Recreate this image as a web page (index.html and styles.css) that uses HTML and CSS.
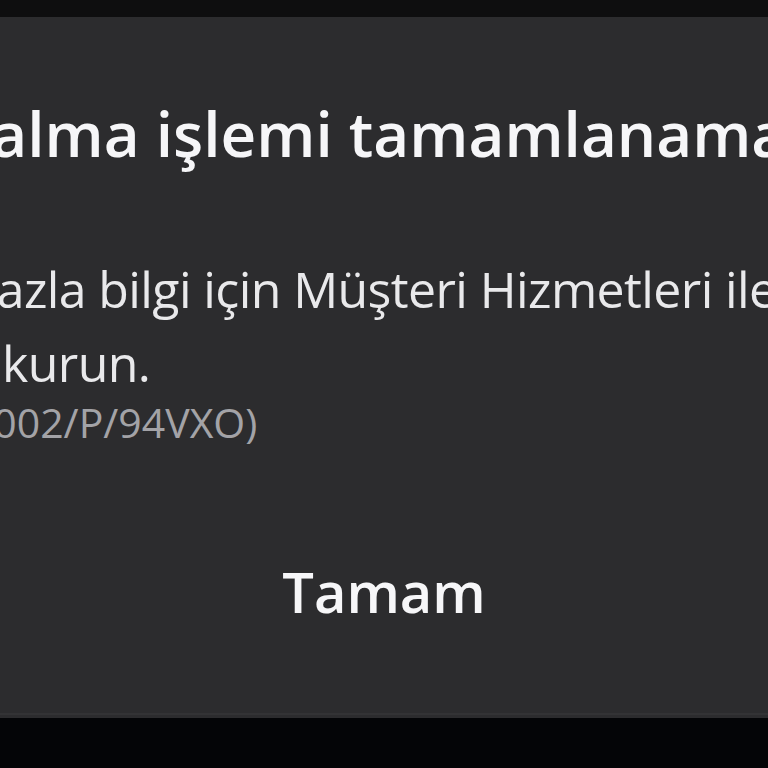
FILE: index.html
```html
<!DOCTYPE html>
<html>
<head>
<meta charset="UTF-8">
<title>Satın alma işlemi tamamlanamadı</title>
<meta name="viewport" content="width=device-width, initial-scale=1.0">
<link rel="stylesheet" href="styles.css">
</head>

<body>

<div class="topbar"></div>

<div class="dialog">
  <div class="content">
    <h1 class="title">Satın alma işlemi tamamlanamadı</h1>
    <p class="msg msg-1">Daha fazla bilgi için Müşteri Hizmetleri ile</p>
    <p class="msg msg-2">iletişim kurun.</p>
    <p class="code">(PR-DBIRC-002/P/94VXO)</p>
  </div>
  <div class="actions">
    <button class="ok">Tamam</button>
  </div>
  <div class="edge"></div>
</div>

</body>
</html>
```

FILE: styles.css
```css
body{margin:0;background:#040507;font-family:"Open Sans",Roboto,sans-serif;height:768px;overflow:hidden}
.topbar{height:17px;background:#0e0e0f}
.dialog{height:701px;background:#2c2c2e;overflow:hidden;display:flex;flex-direction:column;position:relative}
.content{padding-top:76px}
.title{margin:0;font-size:62px;font-weight:600;color:#f6f6f8;white-space:nowrap;line-height:80px;margin-left:-176px}
.msg{margin:0;font-size:50px;color:#e9e9eb;white-space:nowrap;line-height:74px;letter-spacing:-0.6px}
.msg-1{margin-top:79px;margin-left:-152px}
.msg-2{margin-left:-172px}
.code{margin:0;font-size:41px;color:#a3a3a7;white-space:nowrap;line-height:44px;margin-left:-214px}
.actions{display:flex;justify-content:center;padding-top:109px}
.ok{background:none;border:none;color:#f6f6f8;font-family:inherit;font-size:56px;font-weight:600;padding:0 20px}
.edge{position:absolute;left:0;right:0;bottom:3px;height:2px;background:#333335}
```
